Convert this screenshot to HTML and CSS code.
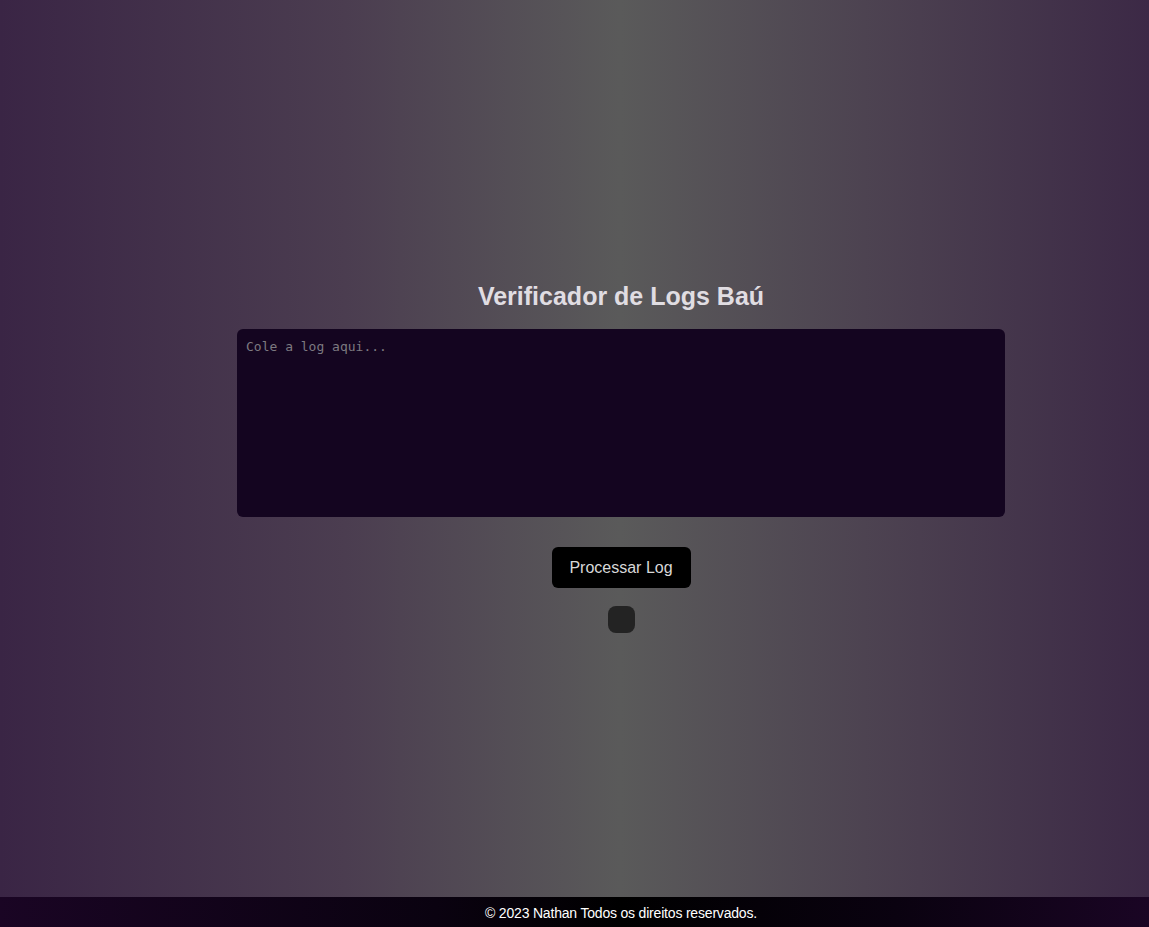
FILE: index.html
```html
<!DOCTYPE html>
<html lang="pt-BR">
<head>
<meta charset="utf-8">
<title>Verificador de Logs Baú</title>
<link rel="stylesheet" href="styles.css">
</head>
<body>
<main class="main">
  <h1 class="title">Verificador de Logs Baú</h1>
  <textarea class="log-input" placeholder="Cole a log aqui..."></textarea>
  <button class="process-btn" type="button">Processar Log</button>
  <div class="result"></div>
</main>
<footer class="footer">© 2023 Nathan Todos os direitos reservados.</footer>
</body>
</html>
```
FILE: styles.css
```css
html, body {
  margin: 0;
  padding: 0;
  height: 100%;
}
body {
  display: flex;
  flex-direction: column;
  min-height: 100vh;
  font-family: "Liberation Sans", Arial, sans-serif;
  background: linear-gradient(to right, #3a2545 0%, #4b3d50 30%, #5a5a5a 54%, #4a3e4f 80%, #3c2946 100%);
  color: #ddd;
}
.main {
  flex: 1;
  display: flex;
  flex-direction: column;
  align-items: center;
  padding: 281px 0 0 93px;
  box-sizing: border-box;
}
.title {
  margin: 0;
  font-size: 25px;
  line-height: 30px;
  font-weight: bold;
  color: #e0dde2;
}
.log-input {
  margin-top: 18px;
  width: 768px;
  height: 188px;
  box-sizing: border-box;
  border: none;
  border-radius: 6px;
  background: #140520;
  color: #ccc;
  padding: 10px 9px;
  font-family: "DejaVu Sans Mono", monospace;
  font-size: 13px;
  resize: none;
  outline: none;
}
.log-input::placeholder {
  color: #7d7a80;
}
.process-btn {
  margin-top: 30px;
  width: 139px;
  height: 41px;
  border: none;
  border-radius: 6px;
  background: #000;
  color: #d8d8d8;
  font-family: "Liberation Sans", Arial, sans-serif;
  font-size: 16px;
  padding-top: 1px;
  cursor: pointer;
}
.result {
  margin-top: 18px;
  width: 27px;
  height: 27px;
  border-radius: 8px;
  background: #232323;
}
.footer {
  height: 30px;
  line-height: 32px;
  padding-left: 93px;
  text-align: center;
  font-size: 14px;
  color: #fff;
  background: linear-gradient(to right, #1a0524 0%, #0a0210 38%, #000 54%, #0a0210 78%, #1a0524 100%);
  letter-spacing: -0.19px;
}
```
